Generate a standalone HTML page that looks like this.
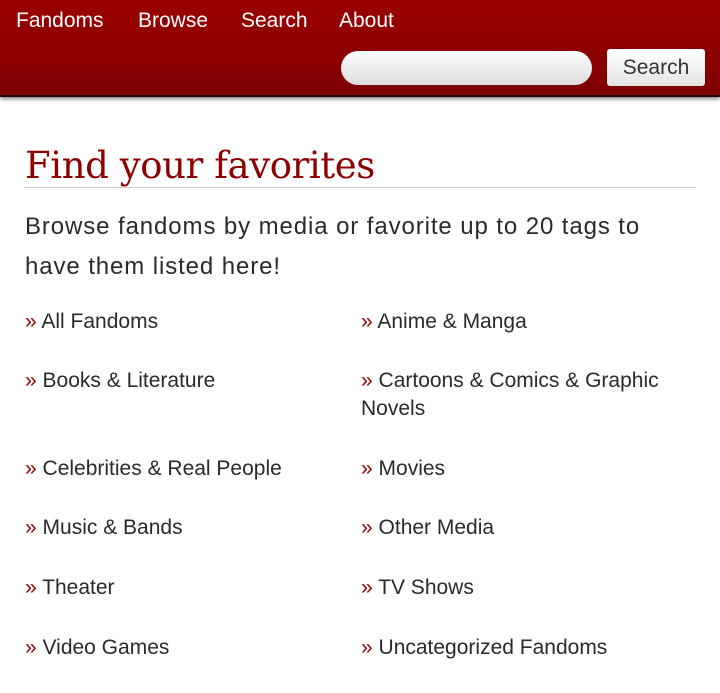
<!DOCTYPE html>
<html><head><style>
body{margin:0;width:720px;height:693px;background:#fff;font-family:"Liberation Sans",sans-serif;overflow:hidden;position:relative}
.hd{position:absolute;left:0;top:0;width:720px;height:97px;background:linear-gradient(#9a0000,#8a0000 70%,#7a0000);box-shadow:0 2px 4px rgba(0,0,0,.5);border-bottom:2px solid #2a0000;box-sizing:border-box}
.nav{position:absolute;top:9px;color:#fff;font-size:21px}
.inp{position:absolute;left:341px;top:51px;width:251px;height:34px;border-radius:17px;background:linear-gradient(#fff,#ddd);}
.btn{position:absolute;left:607px;top:49px;width:98px;height:37px;border-radius:3px;background:linear-gradient(#fff,#e4e4e4);color:#333;font-size:21px;text-align:center;line-height:37px}
h1{position:absolute;left:25px;top:143px;margin:0;font-family:"DejaVu Serif","Liberation Serif",serif;font-weight:normal;font-size:37px;color:#8c0000;width:670px;border-bottom:1px solid #ccc;height:44px;line-height:46px;letter-spacing:-0.4px}
p{position:absolute;left:25px;top:207px;margin:0;font-size:24px;line-height:40px;color:#2a2a2a;width:650px;letter-spacing:0.9px}
.it{position:absolute;font-size:21px;color:#2a2a2a;line-height:28px;width:330px}
.it b{color:#900;font-weight:normal}
</style></head><body>
<div class="hd">
<span class="nav" style="left:16px">Fandoms</span>
<span class="nav" style="left:138px">Browse</span>
<span class="nav" style="left:241px">Search</span>
<span class="nav" style="left:339px">About</span>
<div class="inp"></div>
<div class="btn">Search</div>
</div>
<h1>Find your favorites</h1>
<p>Browse fandoms by media or favorite up to 20 tags to<br>have them listed here!</p>
<div class="it" style="left:25px;top:308px"><b>»</b> All Fandoms</div>
<div class="it" style="left:361px;top:308px"><b>»</b> Anime &amp; Manga</div>
<div class="it" style="left:25px;top:367px"><b>»</b> Books &amp; Literature</div>
<div class="it" style="left:361px;top:367px"><b>»</b> Cartoons &amp; Comics &amp; Graphic Novels</div>
<div class="it" style="left:25px;top:455px"><b>»</b> Celebrities &amp; Real People</div>
<div class="it" style="left:361px;top:455px"><b>»</b> Movies</div>
<div class="it" style="left:25px;top:514px"><b>»</b> Music &amp; Bands</div>
<div class="it" style="left:361px;top:514px"><b>»</b> Other Media</div>
<div class="it" style="left:25px;top:574px"><b>»</b> Theater</div>
<div class="it" style="left:361px;top:574px"><b>»</b> TV Shows</div>
<div class="it" style="left:25px;top:634px"><b>»</b> Video Games</div>
<div class="it" style="left:361px;top:634px"><b>»</b> Uncategorized Fandoms</div>
</body></html>
